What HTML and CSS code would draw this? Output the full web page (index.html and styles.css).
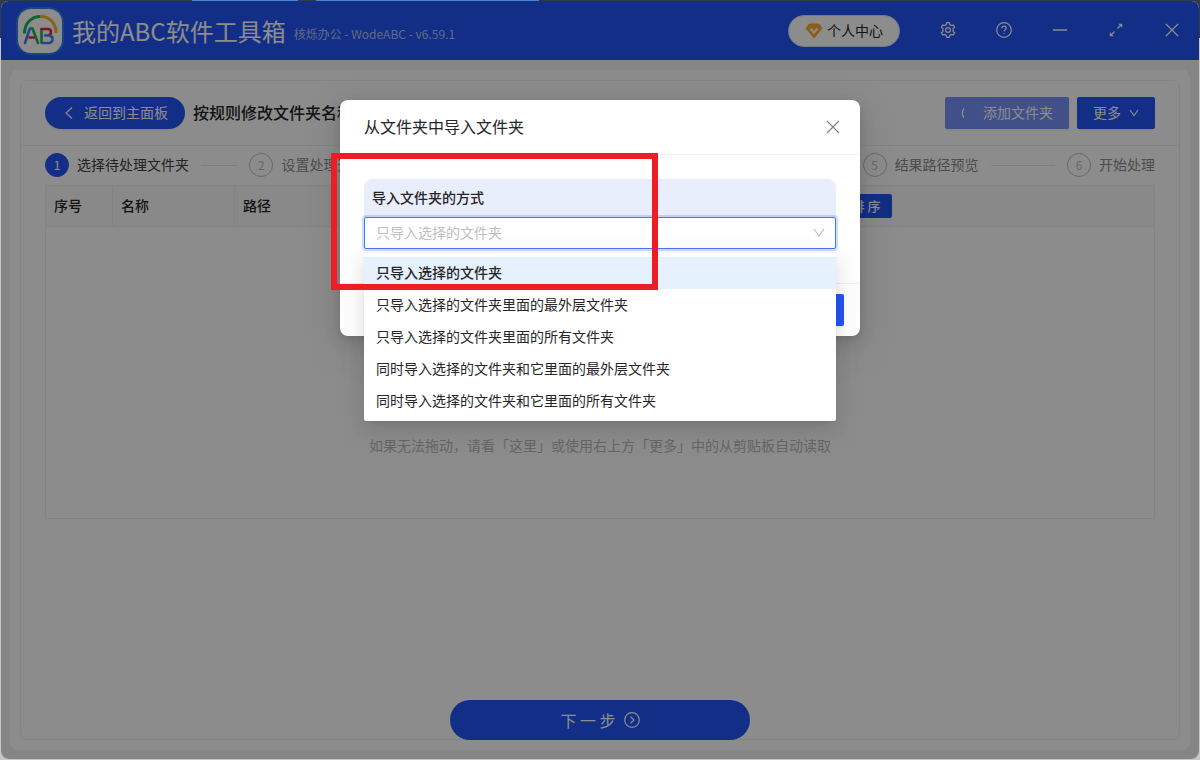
FILE: index.html
```html
<!DOCTYPE html>
<html lang="zh-CN">
<head>
<meta charset="utf-8">
<meta name="viewport" content="width=device-width, initial-scale=1">
<title>我的ABC软件工具箱</title>
<link rel="stylesheet" href="styles.css">
</head>
<body>
<div class="window">
  <header class="titlebar">
    <svg class="logo" viewBox="0 0 50 50" fill="none" aria-hidden="true">
      <rect x="1" y="1" width="48" height="48" rx="15" fill="#2f7fee"/>
      <rect x="3" y="3" width="44" height="44" rx="13" fill="#fff"/>
      <g stroke-width="3">
        <path d="M9.500 27.500C9.500 17.500 16 10.500 25.500 10.500" stroke="#1fb455"/>
        <path d="M25.500 10.500C35 10.500 41 17.500 41 27" stroke="#f9b526"/>
      </g>
      <g stroke-width="2.600" stroke-linecap="round" stroke-linejoin="round">
        <path d="M10 37L14.500 23.500C15.200 21.800 17 22 17.500 23" stroke="#4285f4"/>
        <path d="M17.500 22.500L23 37" stroke="#1fb455"/>
        <path d="M14.500 31.500H19" stroke="#e02b3c"/>
        <path d="M26.500 36.500V23.500" stroke="#1fb455"/>
        <path d="M26.500 23H33C37 23 36.500 28.500 34 29" stroke="#e02b3c"/>
        <path d="M30 29.500H34C39 30 38.500 36.500 34 37H27" stroke="#4285f4"/>
      </g>
    </svg>
    <h1 class="app-name">我的ABC软件工具箱</h1>
    <span class="app-version">核烁办公 - WodeABC - v6.59.1</span>
    <button class="account" type="button">
      <svg width="18" height="16" viewBox="0 0 18 16" aria-hidden="true"><path d="M4 .5h10l3.500 4.800L9 15.500.5 5.300z" fill="#f8ac31"/><path d="M5.500 5.500L9 9.500l3.500-4" fill="none" stroke="#fff" stroke-width="2.200"/></svg>
      <span class="caption">个人中心</span>
    </button>
    <nav class="window-actions" aria-label="窗口">
      <button type="button" aria-label="设置"><svg viewBox="0 0 16 16"><path d="M6.300 2.500L6.700.6h2.600l.4 1.900 1.700 1 1.900-.6 1.300 2.300-1.500 1.300v2.900l1.500 1.300-1.300 2.300-1.900-.6-1.700 1-.4 1.900H6.700l-.4-1.900-1.700-1-1.900.6-1.300-2.300 1.500-1.300V6.500L1.400 5.200l1.300-2.300 1.900.6z"/><circle cx="8" cy="8" r="2.400"/></svg></button>
      <button type="button" aria-label="帮助"><svg viewBox="0 0 16 16"><circle cx="8" cy="8" r="7.300"/><path d="M5.800 6.300C5.800 3.500 10.200 3.500 10.200 6.300 10.200 7.900 8 7.900 8 9.600M8 10.900v1.200"/></svg></button>
      <button type="button" aria-label="最小化"><svg viewBox="0 0 16 16"><path d="M1 8h14" stroke-width="1.600"/></svg></button>
      <button type="button" aria-label="最大化"><svg viewBox="0 0 16 16"><path d="M9.500 6.500L13.500 2.500M6.500 9.500L2.500 13.500"/><path d="M10.200 1.800h4v4zM1.800 10.200v4h4z" fill="#fff" stroke="none"/></svg></button>
      <button type="button" aria-label="关闭"><svg viewBox="0 0 16 16"><path d="M2 2l12 12M14 2L2 14"/></svg></button>
    </nav>
  </header>

  <main class="content">
    <div class="panel">
      <section class="card">
        <div class="toolbar">
          <button class="btn btn-back" type="button"><svg width="14" height="14" viewBox="0 0 14 14"><path d="M10 1.500L4 7l6 5.500"/></svg><span class="caption">返回到主面板</span></button>
          <h2 class="page-title">按规则修改文件夹名称</h2>
          <button class="btn btn-loading" type="button" disabled><svg width="14" height="14" viewBox="0 0 14 14"><path d="M3 2.500C.8 5 .8 9 3 11.500"/></svg><span class="caption">添加文件夹</span></button>
          <button class="btn" type="button"><span class="caption">更多</span><svg width="10" height="10" viewBox="0 0 10 10"><path d="M1 2l4 5.500L9 2"/></svg></button>
        </div>

        <div class="work">
          <ol class="steps">
            <li class="step step-active"><span class="step-number">1</span><span class="caption">选择待处理文件夹</span></li>
            <li class="step"><span class="step-number">2</span><span class="caption">设置处理选项</span></li>
            <li class="step"><span class="step-number">3</span></li>
            <li class="step"><span class="step-number">4</span></li>
            <li class="step"><span class="step-number">5</span><span class="caption">结果路径预览</span></li>
            <li class="step"><span class="step-number">6</span><span class="caption">开始处理</span></li>
          </ol>

          <div class="records">
            <table class="record-table">
              <colgroup><col class="col-index"><col class="col-name"><col><col class="col-sort"></colgroup>
              <thead>
                <tr><th scope="col">序号</th><th scope="col">名称</th><th scope="col">路径</th><th scope="col" class="cell-sort"><button class="btn-sort" type="button">排 序</button></th></tr>
              </thead>
            </table>
            <p class="drop-hint">如果无法拖动，请看「这里」或使用右上方「更多」中的从剪贴板自动读取</p>
          </div>
        </div>
      </section>
    </div>
    <button class="btn-next" type="button">下 一 步<svg width="16" height="16" viewBox="0 0 16 16"><circle cx="8" cy="8" r="7.300"/><path d="M6.500 4.800L10 8l-3.500 3.200"/></svg></button>
  </main>

  <div class="mask">
    <div class="dialog" role="dialog" aria-modal="true" aria-labelledby="dialog-title">
      <div class="dialog-header">
        <h2 class="dialog-title" id="dialog-title">从文件夹中导入文件夹</h2>
        <button class="dialog-close" type="button" aria-label="关闭"><svg width="14" height="14" viewBox="0 0 14 14"><path d="M1 1l12 12M13 1L1 13"/></svg></button>
      </div>
      <div class="dialog-body">
        <label class="field-label" for="import-mode">导入文件夹的方式</label>
        <div class="field">
          <select class="field-select" id="import-mode"><option>只导入选择的文件夹</option></select>
          <svg class="field-arrow" width="12" height="12" viewBox="0 0 12 12"><path d="M1 2l5 7 5-7"/></svg>
          <ul class="menu" role="listbox" aria-label="导入文件夹的方式">
            <li class="menu-item menu-item-selected" role="option" aria-selected="true">只导入选择的文件夹</li>
            <li class="menu-item" role="option">只导入选择的文件夹里面的最外层文件夹</li>
            <li class="menu-item" role="option">只导入选择的文件夹里面的所有文件夹</li>
            <li class="menu-item" role="option">同时导入选择的文件夹和它里面的最外层文件夹</li>
            <li class="menu-item" role="option">同时导入选择的文件夹和它里面的所有文件夹</li>
          </ul>
        </div>
      </div>
      <div class="dialog-footer"><button class="btn" type="button" aria-label="确定"></button></div>
      <div class="highlight"></div>
    </div>
  </div>
</div>
</body>
</html>
```
FILE: styles.css
```css
* { box-sizing: border-box; }

body {
  --blue: #2455f5;
  --line: #eeeeee;
  margin: 0;
  min-height: 100vh;
  display: flex;
  padding: 1px;
  background:
    linear-gradient(90deg, transparent 192px, #4588cc 192px, #4588cc 298px, transparent 298px, transparent 316px, #4588cc 316px, #4588cc 539px, transparent 539px) top / 100% 1px no-repeat,
    linear-gradient(#303b46, #303b46) top / 100% 38px no-repeat,
    #c5c7c9;
  font-family: "Noto Sans CJK SC", "Noto Sans", sans-serif;
  font-size: 14px;
  line-height: 22px;
  color: #262626;
}

h1, h2, p, ul, ol { margin: 0; padding: 0; }
ul, ol { list-style: none; }
button, select { font: inherit; color: inherit; }
button { border: 0; padding: 0; background: none; }
svg { flex: none; fill: none; stroke: currentColor; stroke-width: 1.2; }
.caption { padding-bottom: 2px; }

.window {
  position: relative;
  flex: 1;
  display: flex;
  flex-direction: column;
  border-radius: 8px;
  overflow: hidden;
  background: #f3f3f3;
}

.titlebar {
  display: flex;
  align-items: center;
  height: 59px;
  padding: 0 7px 0 14px;
  background: var(--blue);
  color: #fff;
}
.logo { width: 50px; height: 50px; stroke: none; }
.app-name { margin-left: 7px; font-size: 24px; font-weight: 400; line-height: 32px; white-space: nowrap; }
.app-version { margin-left: 8px; padding-top: 6px; font-size: 12px; color: #b0c0f4; white-space: nowrap; }
.account {
  display: flex;
  align-items: center;
  justify-content: center;
  gap: 4px;
  width: 112px;
  height: 32px;
  margin-left: auto;
  border: 1px solid #d4dcfa;
  border-radius: 16px;
  background: #fff;
  color: #262626;
}
.account svg { stroke: none; }
.window-actions { display: flex; gap: 16px; margin-left: 28px; padding-bottom: 2px; }
.window-actions button { display: grid; place-items: center; width: 40px; height: 40px; }
.window-actions svg { width: 16px; height: 16px; }

.content { position: relative; flex: 1; display: flex; padding: 10px 9px 9px; }
.panel { flex: 1; display: flex; padding: 10px; border-radius: 8px; background: #fff; }
.card { flex: 1; border: 1px solid var(--line); border-radius: 8px; }
.toolbar {
  display: flex;
  align-items: center;
  gap: 8px;
  padding: 16px 24px;
  border-bottom: 1px solid var(--line);
}
.page-title { margin-right: auto; padding-bottom: 2px; font-size: 16px; font-weight: 500; line-height: 24px; }

.btn {
  display: flex;
  align-items: center;
  gap: 8px;
  height: 32px;
  padding: 0 16px;
  border-radius: 2px;
  background: var(--blue);
  color: #fff;
  box-shadow: 0 2px 0 rgba(0, 0, 0, .04);
}
.btn-back { padding: 0 17px; border-radius: 16px; }
.btn-loading { background: #7793f8; }

.work { padding: 0 24px; }
.steps { display: flex; padding: 7px 0 8px; }
.step { flex: 1; display: flex; align-items: center; gap: 8px; white-space: nowrap; color: #8c8c8c; }
.step:last-child { flex: none; }
.step:not(:last-child)::after { content: ""; flex: 1; height: 1px; margin: 0 12px 0 4px; background: #e6e6e6; }
.step-number {
  display: grid;
  place-items: center;
  width: 24px;
  height: 24px;
  border: 1px solid #bfbfbf;
  border-radius: 50%;
  font-size: 12px;
  color: #bfbfbf;
}
.step-active { color: #404040; }
.step-active .step-number { border-color: var(--blue); background: var(--blue); color: #fff; }

.records { border: 1px solid var(--line); }
.record-table { width: 100%; table-layout: fixed; border-collapse: separate; border-spacing: 0; background: #f9f9f9; }
.record-table th {
  height: 41px;
  padding: 0 8px 2px;
  border-bottom: 1px solid var(--line);
  border-right: 1px solid var(--line);
  text-align: left;
  font-weight: 500;
}
.record-table th:last-child { border-right: 0; }
.record-table .cell-sort { padding-bottom: 0; }
.col-index { width: 67px; }
.col-name { width: 122px; }
.col-sort { width: 322px; }
.btn-sort { display: block; width: 52px; height: 24px; border-radius: 2px; background: var(--blue); color: #fff; font-size: 13px; font-weight: 500; }
.drop-hint { padding: 207px 16px 62px; text-align: center; color: #bababa; }

.btn-next {
  position: absolute;
  left: 50%;
  bottom: 19px;
  transform: translateX(-50%);
  display: flex;
  align-items: center;
  justify-content: center;
  gap: 8px;
  width: 300px;
  height: 40px;
  border-radius: 20px;
  background: var(--blue);
  color: #fff;
  font-size: 16px;
}

.mask {
  position: absolute;
  inset: 0;
  display: flex;
  justify-content: center;
  align-items: flex-start;
  padding: 99px 24px;
  background: rgba(0, 0, 0, .45);
}
.dialog {
  position: relative;
  width: 520px;
  border-radius: 8px;
  background: #fff;
  box-shadow: 0 3px 6px rgba(0, 0, 0, .06), 0 6px 16px rgba(0, 0, 0, .1), 0 9px 36px 8px rgba(0, 0, 0, .08);
}
.dialog-header {
  display: flex;
  align-items: center;
  justify-content: space-between;
  height: 55px;
  padding: 0 20px 0 24px;
  border-bottom: 1px solid #f0f0f0;
}
.dialog-title { padding-bottom: 2px; font-size: 16px; font-weight: 400; line-height: 24px; }
.dialog-close { display: grid; place-items: center; height: 24px; color: #808080; }
.dialog-body { padding: 24px 24px 34px; }
.field-label {
  display: block;
  padding: 7px 8px 9px;
  border-radius: 8px 8px 0 0;
  background: #e8eefb;
  font-weight: 500;
}
.field { position: relative; }
.field-select {
  display: block;
  appearance: none;
  width: 100%;
  height: 32px;
  padding: 0 11px 2px;
  border: 1px solid #4379f8;
  border-radius: 2px;
  background: #fff;
  color: #bfbfbf;
  box-shadow: 0 0 0 2px rgba(36, 85, 245, .2);
}
.field-arrow { position: absolute; right: 11px; top: 10px; color: #bfbfbf; }
.menu {
  position: absolute;
  top: 36px;
  left: 0;
  right: 0;
  padding: 4px 0;
  border-radius: 2px;
  background: #fff;
  box-shadow: 0 3px 6px -4px rgba(0, 0, 0, .12), 0 6px 16px rgba(0, 0, 0, .08), 0 9px 28px 8px rgba(0, 0, 0, .05);
}
.menu-item { padding: 4px 12px 6px; }
.menu-item-selected { background: #e6f1fe; font-weight: 500; }
.dialog-footer {
  display: flex;
  justify-content: flex-end;
  padding: 10px 16px;
  border-top: 1px solid #f0f0f0;
}
.dialog-footer .btn { width: 60px; }
.highlight {
  position: absolute;
  top: 53px;
  left: -9px;
  width: 327px;
  height: 137px;
  border: 6px solid #ee1c25;
}
```
